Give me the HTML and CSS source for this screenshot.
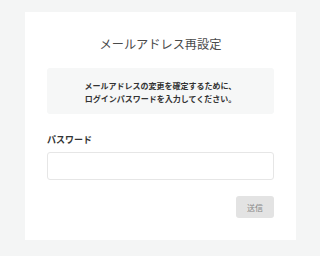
FILE: index.html
```html
<!DOCTYPE html>
<html lang="ja">
<head>
<meta charset="utf-8">
<link rel="stylesheet" href="styles.css">
</head>
<body>
<main class="card">
  <h1 class="title">メールアドレス再設定</h1>
  <div class="notice">
    <p>メールアドレスの変更を確定するために、</p>
    <p>ログインパスワードを入力してください。</p>
  </div>
  <label class="label" for="pw">パスワード</label>
  <input class="input" id="pw" type="password">
  <div class="actions">
    <button class="submit" type="button">送信</button>
  </div>
</main>
</body>
</html>
```

FILE: styles.css
```css
html, body {
  margin: 0;
  padding: 0;
  background: #f4f5f5;
  font-family: "Noto Sans CJK JP", "Noto Sans", sans-serif;
  color: #333;
}
.card {
  box-sizing: border-box;
  margin: 12px 0 0 25px;
  width: 271px;
  height: 228px;
  background: #fff;
  padding: 22px 22px 22px;
  display: flex;
  flex-direction: column;
}
.title {
  margin: 0;
  font-size: 12.2px;
  line-height: 20px;
  font-weight: 400;
  text-align: center;
  color: #4a4a4a;
}
.notice {
  margin-top: 14px;
  background: #f6f7f7;
  border-radius: 3px;
  padding: 11px 0 9px;
  text-align: center;
}
.notice p {
  margin: 0;
  font-size: 8px;
  line-height: 13px;
  font-weight: 700;
  color: #333;
}
.label {
  margin-top: 19px;
  font-size: 9px;
  line-height: 14px;
  font-weight: 700;
  color: #333;
}
.input {
  box-sizing: border-box;
  margin: 5px 0 0;
  height: 28px;
  width: 100%;
  border: 1px solid #e6e6e6;
  border-radius: 3px;
  background: #fff;
  outline: none;
}
.actions {
  margin-top: 16px;
  display: flex;
  justify-content: flex-end;
}
.submit {
  width: 38px;
  height: 22px;
  border: none;
  border-radius: 3px;
  background: #e3e3e3;
  color: #888;
  font-family: "Noto Sans CJK JP", sans-serif;
  font-size: 8px;
  padding: 0;
}
```
